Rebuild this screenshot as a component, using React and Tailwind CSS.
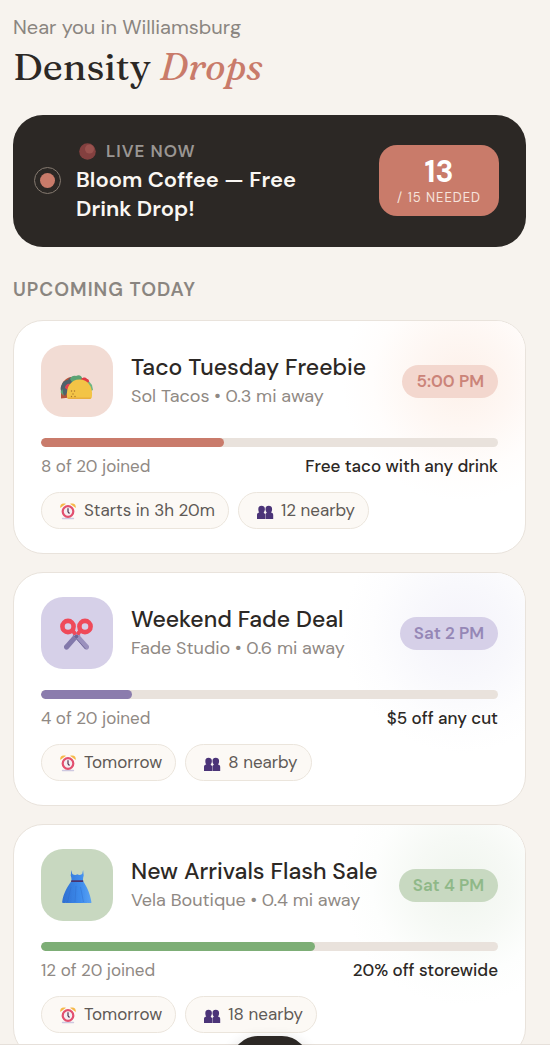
import React from "react";

const drops = [
  {
    title: "Taco Tuesday Freebie",
    place: "Sol Tacos • 0.3 mi away",
    time: "5:00 PM",
    joined: 8,
    total: 20,
    offer: "Free taco with any drink",
    starts: "Starts in 3h 20m",
    nearby: "12 nearby",
    Icon: TacoIcon,
    tile: "bg-[#f2dcd4]",
    pill: "bg-[#f3d7ce] text-[#cb8479]",
    bar: "bg-[#c97b6b]",
    glow: "bg-[radial-gradient(closest-side,#fdf1ea,#fef7f3_40%,#fffdfc_75%,transparent)]",
  },
  {
    title: "Weekend Fade Deal",
    place: "Fade Studio • 0.6 mi away",
    time: "Sat 2 PM",
    joined: 4,
    total: 20,
    offer: "$5 off any cut",
    starts: "Tomorrow",
    nearby: "8 nearby",
    Icon: ScissorsIcon,
    tile: "bg-[#d6d0e8]",
    pill: "bg-[#d6d0e8] text-[#9587b6]",
    bar: "bg-[#8b7cad]",
    glow: "bg-[radial-gradient(closest-side,#f4f3fa,#f8f8fc_40%,#fdfdfe_75%,transparent)]",
  },
  {
    title: "New Arrivals Flash Sale",
    place: "Vela Boutique • 0.4 mi away",
    time: "Sat 4 PM",
    joined: 12,
    total: 20,
    offer: "20% off storewide",
    starts: "Tomorrow",
    nearby: "18 nearby",
    Icon: DressIcon,
    tile: "bg-[#c8d8c0]",
    pill: "bg-[#c8d9c1] text-[#8fb888]",
    bar: "bg-[#7dae76]",
    glow: "bg-[radial-gradient(closest-side,#f0f5ee,#f6f9f5_40%,#fdfefd_75%,transparent)]",
  },
];

function TacoIcon() {
  return (
    <svg viewBox="0 0 36 36" className="size-9" aria-hidden="true">
      <path d="M2 35.5V27c0-7 4-12 10-13l4 20z" fill="#b5523a" />
      <path d="M2 28c-1-3 0-5 1-7 1-3 4-4 6-4 1-3 4-3 6-2l-5 12-4 6z" fill="#50626b" />
      <path d="M11 16c1-3 4-4 6-3 3-2 6 0 6 2l4 1-12 6z" fill="#5ba374" />
      <path d="M24 16l5 1 4 5 1 5-2 1z" fill="#6fb583" />
      <path d="M22 16c2-2 5-2 6 0 2 0 2 2 2 3l-4 2z" fill="#e03a45" />
      <path d="M6 25c0-3 3-5 5-4l-2 6z" fill="#e44352" />
      <path d="M1.500 29l2-3 1 7z" fill="#5ba374" />
      <path d="M8 34c-1-10 4-17.500 12.500-17.500S34 24 33 33c-.2 2-1 3-3 3H10c-1.500 0-2-1-2-2z" fill="#f3c446" />
      <path d="M8.500 34.500h24c-.4 1-1.200 1.500-2.500 1.500H10c-1 0-1.400-.8-1.500-1.500z" fill="#e9ae3c" />
      <g fill="#a8752c">
        <circle cx="12.500" cy="28" r=".7" />
        <circle cx="15.500" cy="28" r=".7" />
        <circle cx="14" cy="31" r=".7" />
        <circle cx="12.500" cy="33.500" r=".7" />
        <circle cx="16" cy="33.500" r=".7" />
      </g>
    </svg>
  );
}

function ScissorsIcon() {
  return (
    <svg viewBox="0 0 36 36" className="size-9" aria-hidden="true">
      <path d="M17 17.500l4.500 2.500L9 34.300c-2 1.200-4.600-.6-4-3.300z" fill="#8379ab" />
      <path d="M18 17.500l-4.500 2.500L26 34.300c2 1.200 4.600-.6 4-3.300z" fill="#9a90bd" />
      <path d="M14.500 20.500L26.500 34" stroke="#766d9e" strokeWidth="1" />
      <circle cx="9" cy="11.500" r="5.600" fill="none" stroke="#ef4a59" strokeWidth="4.600" />
      <circle cx="26" cy="11.500" r="5.600" fill="none" stroke="#ef4a59" strokeWidth="4.600" />
      <path d="M13.500 15.500l2 2.500M21.500 15.500l-2 2.500" stroke="#ef4a59" strokeWidth="4" strokeLinecap="round" />
      <circle cx="17.500" cy="21.500" r="1.800" fill="#6e6595" />
    </svg>
  );
}

function DressIcon() {
  return (
    <svg viewBox="0 0 36 36" className="size-9" aria-hidden="true">
      <defs>
        <linearGradient id="dressFill" x1="0" x2="1">
          <stop offset="0" stopColor="#2f6fd0" />
          <stop offset=".6" stopColor="#3d8bec" />
          <stop offset="1" stopColor="#5aa2f4" />
        </linearGradient>
      </defs>
      <path
        d="M12.500 3l.8 4c2 1 3.500 1.300 5 .2 1.800 1.100 3 .8 4.900-.2l.9-4 .6 5.500c-.6 2-.8 3.500-.7 5.500 3.500 5.500 7 11.500 8.500 21.500-1.500 1.600-3.300 1.600-4.300.3-1.200 1.600-3 1.600-4.200.2-1.400 1.500-3.400 1.500-4.600.1-1.300 1.400-3.300 1.400-4.500 0-1.300 1.300-3 1.300-4.200 0-1.200 1.100-3 1.100-4.200-.3-1.200.9-2.500.6-3.400-.6C4.500 25.500 8.700 19.300 12.500 14c.1-2-.1-3.500-.8-5.500z"
        fill="url(#dressFill)"
      />
      <path d="M12 20L8.500 35M17 19l-1 16M21.500 20l3 15" stroke="#2e66c2" strokeWidth=".6" opacity=".6" />
      <path d="M12.300 13.200h11.900v1.900H12z" fill="#49346f" />
    </svg>
  );
}

function ClockIcon() {
  return (
    <svg viewBox="0 0 18 18" className="size-[18px] shrink-0" aria-hidden="true">
      <path d="M3.500 16.500h11" stroke="#cdc8e0" strokeWidth="1.400" strokeLinecap="round" />
      <path d="M1.300 6C.6 2.500 3 .6 7 1.800zM16.700 6c.7-3.500-1.700-5.400-5.700-4.200z" fill="#f6b94a" />
      <circle cx="9" cy="9.500" r="5.300" fill="#f5eef2" stroke="#e2506f" strokeWidth="2.200" />
      <path d="M9 6.300v3.500l1.500 1.700" fill="none" stroke="#4a3450" strokeWidth="1.200" />
    </svg>
  );
}

function PeopleIcon() {
  return (
    <svg viewBox="0 0 18 18" className="size-[18px] shrink-0" aria-hidden="true">
      <g fill="#4b3478">
        <path d="M2.300 7C2.300 4.800 3.600 3.800 5.500 3.800s3.400 1 3.400 3.200c0 1.600-.6 2.800-1.300 3.600L9 12v5H1v-4c0-1.400.8-2 2.300-2.400C2.600 9.800 2.300 8.500 2.300 7z" />
        <path d="M9.500 7c0-2.200 1.300-3.200 3.200-3.200s3.400 1 3.400 3.200c0 1.500-.4 2.800-1.200 3.600 1.500.4 2.300 1 2.300 2.400v4H9.400v-5l1.500-1.400C10 9.800 9.500 8.600 9.500 7z" />
      </g>
    </svg>
  );
}

function Chip({ icon, children }) {
  return (
    <li className="flex items-center gap-[7px] rounded-full border border-[#ebe5dc] bg-[#fcf9f5] pr-[13px] pl-[17px] text-[17px] leading-[35px] text-[#5f5a56]">
      {icon}
      {children}
    </li>
  );
}

function DropCard({ drop }) {
  const { Icon } = drop;
  return (
    <article className="relative isolate overflow-hidden rounded-[30px] border border-[#e9e3dc] bg-white px-[27px] py-6">
      <div className={`pointer-events-none absolute -top-[60px] -right-[57px] -z-10 size-[240px] ${drop.glow}`} />
      <div className="flex items-center gap-[18px]">
        <div className={`flex size-[72px] shrink-0 items-center justify-center rounded-[22px] ${drop.tile}`}>
          <Icon />
        </div>
        <div className="min-w-0 flex-1">
          <h3 className="text-[23px] leading-[30px] font-medium whitespace-nowrap text-[#2c2825]">{drop.title}</h3>
          <p className="text-[18px] leading-[28px] whitespace-nowrap text-[#8f8984]">{drop.place}</p>
        </div>
        <time className={`shrink-0 rounded-full px-[14px] text-[17px] leading-[33px] font-semibold ${drop.pill}`}>
          {drop.time}
        </time>
      </div>
      <div className="mt-[21px] h-[9px] overflow-hidden rounded-full bg-[#e9e2dc]">
        <div className={`h-full rounded-full ${drop.bar}`} style={{ width: `${(drop.joined / drop.total) * 100}%` }} />
      </div>
      <div className="mt-[7px] flex justify-between text-[17px] leading-6">
        <span className="text-[#8f8984]">
          {drop.joined} of {drop.total} joined
        </span>
        <span className="font-medium text-[#2c2825]">{drop.offer}</span>
      </div>
      <ul className="mt-[14px] flex gap-[9px]">
        <Chip icon={<ClockIcon />}>{drop.starts}</Chip>
        <Chip icon={<PeopleIcon />}>{drop.nearby}</Chip>
      </ul>
    </article>
  );
}

export default function App() {
  return (
    <div className="flex h-screen flex-col overflow-hidden bg-[#f7f3ee] font-['DM_Sans',Inter,sans-serif]">
      <main className="min-h-0 flex-1 overflow-hidden pr-6 pl-[13px]">
        <header className="pt-[13px]">
          <p className="text-[20px] leading-7 text-[#8a8580]">Near you in Williamsburg</p>
          <h1 className="font-['Fraunces','Liberation_Serif',serif] text-[38px] leading-[52px] text-[#2c2825]">
            Density <em className="text-[#c97b6a]">Drops</em>
          </h1>
        </header>

        <section className="mt-[22px] flex items-center rounded-[30px] bg-[#2c2825] pt-[23px] pr-[27px] pb-6 pl-[21px]">
          <div className="flex size-[27px] shrink-0 items-center justify-center rounded-full border border-[#857a70]">
            <span className="size-[15px] rounded-full bg-[#c97b6a]" />
          </div>
          <div className="ml-[15px] min-w-0 flex-1">
            <p className="flex items-center gap-[10px] pl-[3px] text-[17px] leading-[27px] font-semibold tracking-[1px] text-[#9a9693]">
              <svg viewBox="0 0 17 17" className="size-[17px]" aria-hidden="true">
                <circle cx="8.500" cy="8.500" r="8.300" fill="#83403f" />
                <circle cx="10.500" cy="6" r="4.500" fill="#a35a56" opacity=".7" />
              </svg>
              LIVE NOW
            </p>
            <h2 className="max-w-[260px] text-[22px] leading-[29px] font-semibold text-[#faf7f3]">
              Bloom Coffee — Free Drink Drop!
            </h2>
          </div>
          <div className="shrink-0 rounded-[18px] bg-[#c97b6a] px-[18px] py-[10px] text-center text-white">
            <p className="text-[30px] leading-[34px] font-bold">13</p>
            <p className="text-[13px] leading-[17px] tracking-[1px] text-[#f6e3dc]">/ 15 NEEDED</p>
          </div>
        </section>

        <h2 className="mt-[29px] text-[19px] leading-7 font-semibold tracking-[1px] text-[#8a8580]">UPCOMING TODAY</h2>

        <div className="mt-4 flex flex-col gap-[18px]">
          {drops.map((drop) => (
            <DropCard key={drop.title} drop={drop} />
          ))}
        </div>
      </main>

      <nav className="relative flex h-px shrink-0 justify-center bg-[#e6e0da] pr-6 pl-[13px]" aria-label="Main">
        <button
          type="button"
          aria-label="Create drop"
          className="absolute -top-2 size-[78px] rounded-[27px] bg-[#2c2825] shadow-[0_4px_14px_rgba(44,40,37,0.2)]"
        />
      </nav>
    </div>
  );
}
